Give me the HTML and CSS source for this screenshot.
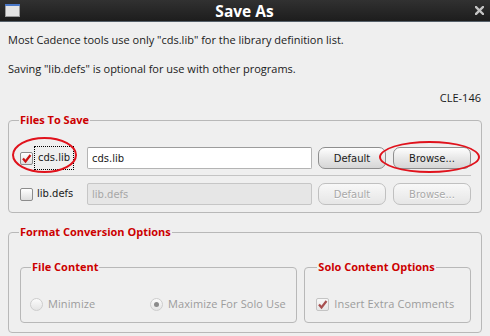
FILE: index.html
```html
<!DOCTYPE html>
<html>
<head>
<meta charset="utf-8">
<link rel="stylesheet" href="styles.css">
</head>
<body>
<div class="window">
  <div class="titlebar">
    <svg class="app-icon" width="15" height="13" viewBox="0 0 15 13">
      <rect x="0.5" y="0.5" width="14" height="12" fill="#dcdcdc" stroke="#9a9a9a"/>
      <rect x="0" y="0" width="15" height="2" fill="#4a78c8"/>
      <rect x="1" y="2" width="13" height="10" fill="#e4e4e4"/>
    </svg>
    <span class="title">Save As</span>
    <svg class="close-icon" width="9" height="9" viewBox="0 0 9 9">
      <path d="M1 1 L8 8 M8 1 L1 8" stroke="#c4c4c4" stroke-width="2.4" stroke-linecap="square"/>
    </svg>
  </div>
  <div class="content">
    <p class="msg">Most Cadence tools use only "cds.lib" for the library definition list.</p>
    <p class="msg gap">Saving "lib.defs" is optional for use with other programs.</p>
    <p class="msg gap code">CLE-146</p>

    <fieldset class="group files">
      <legend class="group-title">Files To Save</legend>
      <div class="file-row">
        <div class="check-cell">
          <span class="checkbox">
            <svg width="13" height="13" viewBox="0 0 13 13"><path d="M3 6.5 L5.5 9.5 L10.5 3" fill="none" stroke="#cc1111" stroke-width="2.2"/></svg>
          </span>
          <span class="check-label focused">cds.lib</span>
        </div>
        <input class="field" type="text" value="cds.lib">
        <button class="btn btn-default">Default</button>
        <button class="btn btn-browse">Browse...</button>
        <span class="mark mark-check"></span>
        <span class="mark mark-browse"></span>
      </div>
      <div class="separator"></div>
      <div class="file-row">
        <div class="check-cell">
          <span class="checkbox"></span>
          <span class="check-label">lib.defs</span>
        </div>
        <input class="field" type="text" value="lib.defs" disabled>
        <button class="btn btn-default" disabled>Default</button>
        <button class="btn btn-browse" disabled>Browse...</button>
      </div>
    </fieldset>

    <fieldset class="group format">
      <legend class="group-title">Format Conversion Options</legend>
      <div class="subgroups">
        <fieldset class="group sub sub-content">
          <legend class="group-title">File Content</legend>
          <div class="option-row">
            <span class="option opt-min"><span class="radio"></span><span class="opt-text">Minimize</span></span>
            <span class="option"><span class="radio selected"></span><span class="opt-text">Maximize For Solo Use</span></span>
          </div>
        </fieldset>
        <fieldset class="group sub sub-solo">
          <legend class="group-title">Solo Content Options</legend>
          <div class="option-row">
            <span class="option"><span class="checkbox disabled">
              <svg width="13" height="13" viewBox="0 0 13 13"><path d="M3 6.5 L5.5 9.5 L10.5 3" fill="none" stroke="#a85050" stroke-width="2.2"/></svg>
            </span><span class="opt-text">Insert Extra Comments</span></span>
          </div>
        </fieldset>
      </div>
    </fieldset>
  </div>
</div>
</body>
</html>
```

FILE: styles.css
```css
* { box-sizing: border-box; }
html, body { margin: 0; padding: 0; }
body {
  width: 490px;
  height: 336px;
  background: #efefef;
  overflow: hidden;
  font-family: "Open Sans", "DejaVu Sans", sans-serif;
}
.window { width: 490px; height: 336px; display: flex; flex-direction: column; }

.titlebar {
  height: 22px;
  flex: none;
  display: flex;
  align-items: center;
  padding: 0 6px 0 5px;
  background: linear-gradient(#313131, #1d1d1d);
  border-bottom: 1px solid #56606a;
}
.app-icon { flex: none; }
.title {
  flex: 1;
  text-align: center;
  color: #ffffff;
  font-weight: bold;
  font-size: 15.5px;
  line-height: 20px;
  padding-right: 6px;
}
.close-icon { flex: none; }

.content { padding: 0 8px; display: flex; flex-direction: column; }
.msg {
  margin: 10px 0 0 0;
  font-size: 11px;
  line-height: 16px;
  color: #1a1a1a;
}
.msg.gap { margin-top: 13px; }
.code { text-align: right; padding-right: 1px; }

.group {
  margin: 0;
  border: 1px solid #b8b8b8;
  border-radius: 4px;
  min-width: 0;
}
.group-title {
  padding: 0 1px;
  margin-left: -1px;
  font-family: "Open Sans", sans-serif;
  font-weight: bold;
  font-size: 11px;
  line-height: 14px;
  color: #cc0000;
}
.files { margin-top: 7px; padding: 20px 10px 7px 11px; }

.file-row {
  position: relative;
  display: flex;
  align-items: center;
  height: 22px;
}
.check-cell { width: 67px; flex: none; display: flex; align-items: center; }
.checkbox {
  width: 13px;
  height: 13px;
  flex: none;
  border: 1px solid #8c8c8c;
  border-radius: 2px;
  background: linear-gradient(#ffffff, #dedede);
  display: inline-flex;
  align-items: center;
  justify-content: center;
  overflow: hidden;
}
.checkbox svg { flex: none; margin: -1px; }
.checkbox.disabled { border-color: #c4c4c4; background: linear-gradient(#f8f8f8, #e6e6e6); }
.check-label {
  font-family: "DejaVu Sans", sans-serif;
  font-size: 10px;
  line-height: 14px;
  color: #1a1a1a;
  margin-left: 0;
  padding: 0 3px;
  border: 1px dotted transparent;
}
.check-label.focused { border-color: #000; margin-left: 1px; padding: 4px 3px; }

.field {
  width: 225px;
  height: 22px;
  flex: none;
  margin: 0;
  padding: 0 4px;
  border: 1px solid #b4b4b4;
  border-top-color: #9c9c9c;
  border-radius: 2px;
  background: #ffffff;
  font-family: "DejaVu Sans", sans-serif;
  font-size: 10px;
  color: #1a1a1a;
  outline: none;
}
.field:disabled { background: #e6e6e6; border-color: #c6c6c6; color: #a6a6a6; }

.btn {
  height: 22px;
  flex: none;
  margin: 0;
  padding: 0;
  border: 1px solid #8e8e8e;
  border-radius: 7px;
  background: linear-gradient(#fefefe, #e8e8e8 50%, #d6d6d6);
  font-family: "DejaVu Sans", sans-serif;
  font-size: 10px;
  color: #1a1a1a;
}
.btn:disabled {
  border-color: #c0c0c0;
  color: #a8a8a8;
  text-shadow: 0 1px 0 #ffffff;
  background: linear-gradient(#f8f8f8, #e6e6e6);
}
.btn-default { width: 68px; margin-left: 6px; }
.btn-browse { width: 78px; margin-left: 7px; }

.mark {
  position: absolute;
  border: 2px solid #e0121c;
  border-radius: 50%;
  pointer-events: none;
}
.mark-check { left: -8px; top: -10px; width: 65px; height: 36px; }
.mark-browse { left: 359px; top: -6px; width: 101px; height: 32px; }

.separator { height: 1px; background: #c4c4c4; margin: 6px 0 7px 0; }

.format { margin-top: 12px; padding: 21px 10px 9px 11px; }
.subgroups { display: flex; gap: 7px; }
.sub { padding: 22px 8px 10px 9px; }
.sub-content { width: 278px; }
.sub-solo { width: 167px; padding-left: 11px; }
.sub .group-title { margin-left: 1px; }

.option-row { display: flex; align-items: center; height: 16px; }
.option { display: flex; align-items: center; }
.opt-min { width: 120px; }
.opt-text {
  font-size: 11px;
  line-height: 16px;
  color: #9c9c9c;
  margin-left: 5px;
  letter-spacing: 0.1px;
}
.radio {
  width: 13px;
  height: 13px;
  flex: none;
  border: 1px solid #cdcdcd;
  border-radius: 50%;
  background: linear-gradient(#fbfbfb, #e4e4e4);
  display: inline-flex;
  align-items: center;
  justify-content: center;
}
.radio.selected::after {
  content: "";
  width: 5px;
  height: 5px;
  border-radius: 50%;
  background: #8a8a8a;
}
```
